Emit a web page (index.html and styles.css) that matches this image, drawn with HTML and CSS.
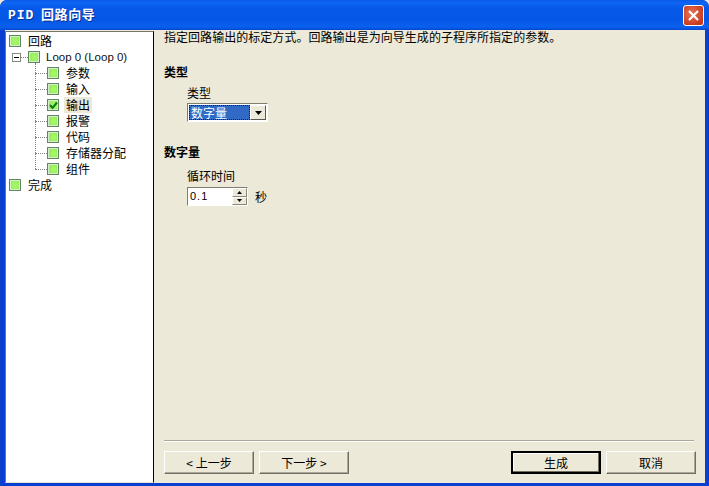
FILE: index.html
```
<!DOCTYPE html>
<html lang="zh">
<head>
<meta charset="utf-8">
<title>PID 回路向导</title>
<link rel="stylesheet" href="styles.css">
</head>
<body>
<div class="window">
  <header class="titlebar">
    <span class="title"><span class="title-latin">PID</span> 回路向导</span>
    <span class="close"><svg width="13" height="13" viewBox="0 0 13 13"><path d="M2 2 L11 11 M11 2 L2 11" stroke="#fff" stroke-width="2.2" fill="none"/></svg></span>
  </header>
  <div class="main">
    <nav class="tree">
      <div class="row"><i class="box"></i><span class="label">回路</span></div>
      <div class="row"><i class="expander"></i><i class="dash-short"></i><i class="box"></i><span class="label latin">Loop 0 (Loop 0)</span></div>
      <div class="children">
        <div class="row"><i class="dash"></i><i class="box"></i><span class="label">参数</span></div>
        <div class="row"><i class="dash"></i><i class="box"></i><span class="label">输入</span></div>
        <div class="row"><i class="dash"></i><i class="box"><svg width="9" height="9" viewBox="0 0 9 9"><path d="M1 4 L3.5 7 L8 1.5" stroke="#0d7a1e" stroke-width="2" fill="none"/></svg></i><span class="label selected">输出</span></div>
        <div class="row"><i class="dash"></i><i class="box"></i><span class="label">报警</span></div>
        <div class="row"><i class="dash"></i><i class="box"></i><span class="label">代码</span></div>
        <div class="row"><i class="dash"></i><i class="box"></i><span class="label">存储器分配</span></div>
        <div class="row"><i class="dash"></i><i class="box"></i><span class="label">组件</span></div>
      </div>
      <div class="row"><i class="box"></i><span class="label">完成</span></div>
    </nav>
    <section class="panel">
      <p class="intro">指定回路输出的标定方式。回路输出是为向导生成的子程序所指定的参数。</p>
      <h2 class="heading first">类型</h2>
      <div class="field">
        <label class="field-label">类型</label>
        <div class="combo"><span class="combo-value"><span class="combo-focus">数字量</span></span><span class="combo-btn"><svg width="7" height="4" viewBox="0 0 7 4"><path d="M0 0 H7 L3.5 4 Z" fill="#000"/></svg></span></div>
      </div>
      <h2 class="heading second">数字量</h2>
      <div class="field">
        <label class="field-label">循环时间</label>
        <div class="spin-line">
          <div class="spin"><span class="spin-value">0.1</span><span class="spin-btns"><span class="spin-btn"><svg width="5" height="3" viewBox="0 0 5 3"><path d="M2.5 0 L5 3 H0 Z" fill="#000"/></svg></span><span class="spin-btn"><svg width="5" height="3" viewBox="0 0 5 3"><path d="M0 0 H5 L2.5 3 Z" fill="#000"/></svg></span></span></div>
          <span class="unit">秒</span>
        </div>
      </div>
      <footer class="footer">
        <div class="buttons">
          <button class="btn">&lt; 上一步</button>
          <button class="btn">下一步 &gt;</button>
          <span class="spacer"></span>
          <button class="btn default">生成</button>
          <button class="btn">取消</button>
        </div>
      </footer>
    </section>
  </div>
</div>
</body>
</html>
```
FILE: styles.css
```
* { box-sizing: border-box; }
html, body { margin: 0; padding: 0; height: 100%; background: #ece9d8; }
body { font-family: "Noto Sans CJK SC", "Noto Sans", sans-serif; font-size: 12px; color: #000; overflow: hidden; }
.window { width: 709px; height: 486px; display: flex; flex-direction: column; background: #0a3fd0; border-radius: 7px 7px 0 0; overflow: hidden; }
.titlebar { height: 30px; flex: none; display: flex; align-items: center; justify-content: space-between; padding: 0 5px 0 8px;
  background: linear-gradient(#0a5ae6 0, #0f66f4 3px, #0659e8 8px, #0558e6 20px, #0a60ee 27px, #0448d0 30px); }
.title { color: #fff; font-size: 13px; font-weight: 700; letter-spacing: .6px; text-shadow: 1px 1px 0 #0b2f9a; line-height: 30px; }
.title-latin { font-family: "Liberation Mono", monospace; letter-spacing: 1px; margin-right: 3px; }
.close { width: 21px; height: 21px; display: flex; align-items: center; justify-content: center; background: radial-gradient(circle at 40% 40%, #e8775a, #c8391c 75%); border: 1px solid #fff; border-radius: 3px; }
.main { flex: 1; min-height: 0; display: flex; margin: 0 4px 3px 5px; background: #ece9d8; border-top: 1px solid #ece9d8; }
.tree { width: 149px; flex: none; background: #fff; border: 1px solid #000; border-bottom-color: #e4e2d4; border-left-color: #77766c; border-top-color: #77766c; padding: 1px 0 0 3px; }
.row { height: 16px; display: flex; align-items: center; }
.box { width: 12px; height: 12px; flex: none; display: flex; align-items: center; justify-content: center; border: 1px solid #62865f; background: radial-gradient(circle at 55% 55%, #a8f86c, #96f05c 60%, #b8ec9c); box-shadow: inset 0 0 0 1px #d8ecd0; }
.label { margin-left: 5px; padding: 0 2px; height: 16px; line-height: 16px; font-size: 12px; white-space: nowrap; }
.latin { margin-left: 4px; font-family: "Liberation Sans", sans-serif; font-size: 11.5px; color: #111; }
.selected { background: #ece9d8; }
.expander { width: 9px; height: 9px; flex: none; margin-left: 3px; border: 1px solid #8a8a80; background: linear-gradient(#000,#000) center / 5px 1px no-repeat #fff; }
.dash-short { width: 7px; flex: none; border-top: 1px dotted #808080; }
.children { margin-left: 26px; position: relative; }
.children::before { content: ""; position: absolute; left: 0; top: -2px; height: 106px; border-left: 1px dotted #808080; }
.dash { width: 12px; flex: none; border-top: 1px dotted #808080; }
.panel { flex: 1; min-width: 0; display: flex; flex-direction: column; padding: 0 11px 0 10px; }
.intro { margin: 0; font-size: 12px; line-height: 12px; letter-spacing: .04px; white-space: nowrap; }
.heading { margin: 0; font-size: 12px; font-weight: 700; line-height: 16px; }
.heading.first { margin-top: 21px; }
.heading.second { margin-top: 22px; }
.field { padding-left: 23px; }
.field-label { display: block; line-height: 14px; }
.first + .field { margin-top: 6px; }
.second + .field { margin-top: 9px; }
.combo { width: 81px; height: 19px; margin-top: 3px; display: flex; border: 1px solid; border-color: #7f7d70 #fff #fff #7f7d70; background: #fff; padding: 1px; }
.combo-value { flex: 1; background: #316ac5; color: #fff; display: flex; }
.combo-focus { flex: 1; border: 1px dotted #0b1f4c; line-height: 13px; padding-left: 1px; }
.combo-btn { width: 16px; flex: none; display: flex; align-items: center; justify-content: center; background: #ece9d8; border: 1px solid; border-color: #fff #5b594f #5b594f #fff; }
.spin-line { display: flex; align-items: center; gap: 7px; margin-top: 4px; }
.spin { width: 61px; height: 19px; display: flex; border: 1px solid; border-color: #7f7d70 #fff #fff #7f7d70; background: #fff; }
.spin-value { flex: 1; font-family: "Liberation Sans", sans-serif; font-size: 11px; letter-spacing: 1px; line-height: 17px; padding-left: 2px; }
.spin-btns { width: 15px; flex: none; display: flex; flex-direction: column; }
.spin-btn { flex: 1; display: flex; align-items: center; justify-content: center; background: #ece9d8; border: 1px solid; border-color: #fff #8a887c #8a887c #fff; }
.unit { line-height: 18px; }
.footer { margin-top: auto; border-top: 1px solid #aca899; box-shadow: inset 0 1px 0 #fff; padding: 10px 0 9px; }
.buttons { display: flex; margin-right: -2px; gap: 5px; }
.spacer { flex: 1; }
.btn { width: 90px; height: 23px; padding: 0; font: 12px "Noto Sans CJK SC", sans-serif; color: #000; background: #ece9d8; border: 1px solid; border-color: #fff #716f64 #716f64 #fff; box-shadow: inset -1px -1px 0 #aca899; line-height: 20px; }
.btn.default { border: 2px solid #000; box-shadow: inset -1px -1px 0 #716f64, inset 1px 1px 0 #fff; }
```
